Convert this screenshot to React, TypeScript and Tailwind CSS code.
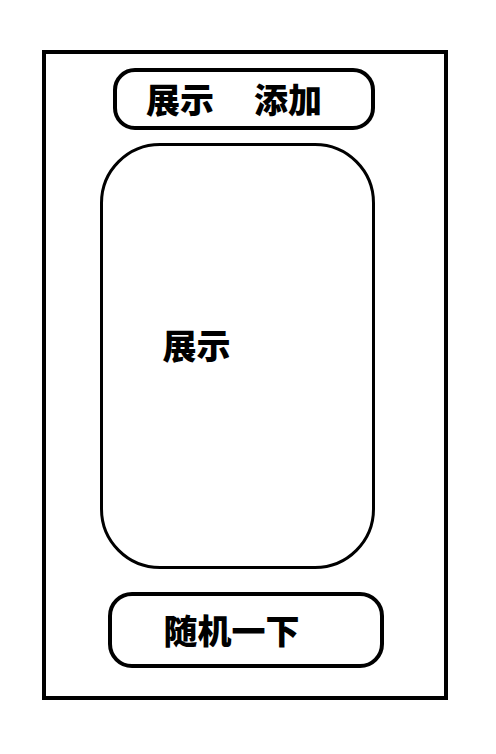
export default function App() {
  return (
    <div
      className="h-[754px] w-[496px] bg-white pl-[42px] pt-[50px]"
      style={{ fontFamily: '"Noto Sans CJK SC", "Noto Sans", sans-serif' }}
    >
      <div className="flex h-[650px] w-[406px] flex-col items-center border-4 border-black">
        <div className="ml-[-2px] mt-[14px] flex h-[62px] w-[262px] items-center gap-[40px] rounded-[22px] border-4 border-black pl-[29px] text-[34px] font-black leading-none text-black">
          <span>展示</span>
          <span>添加</span>
        </div>
        <div className="ml-[-16px] mt-[13px] flex h-[426px] w-[275px] items-center rounded-[60px] border-[3px] border-black pb-[22px] pl-[60px] text-[34px] font-black leading-none text-black">
          展示
        </div>
        <div className="ml-[1px] mt-[23px] flex h-[76px] w-[276px] items-center rounded-[24px] border-4 border-black pl-[52px] text-[34px] font-black leading-none text-black">
          随机一下
        </div>
      </div>
    </div>
  );
}
